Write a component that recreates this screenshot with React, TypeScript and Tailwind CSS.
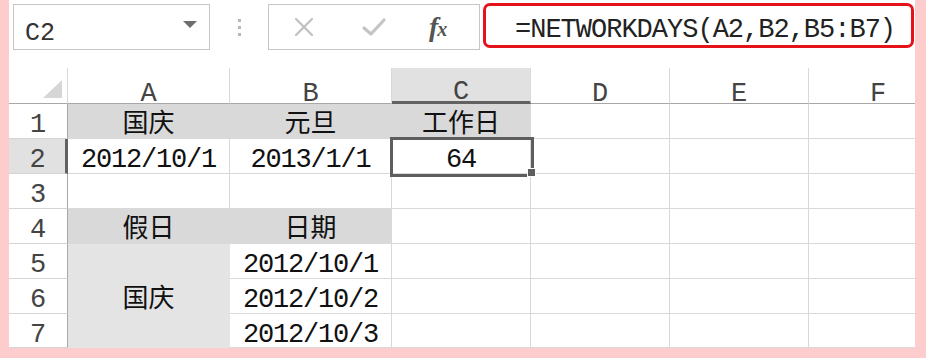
import React from 'react'

const COLS = ['A', 'B', 'C', 'D', 'E', 'F']

const mono = "font-['Liberation_Mono','Noto_Sans_CJK_SC',monospace]"
const cjk = "font-['Noto_Sans_CJK_SC',sans-serif]"

function XIcon() {
  return (
    <svg width="22" height="20" viewBox="0 0 22 20" fill="none" stroke="#c0c0c0" strokeWidth="2.2" strokeLinecap="round">
      <path d="M3 2 L19 18" />
      <path d="M19 2 L3 18" />
    </svg>
  )
}

function CheckIcon() {
  return (
    <svg width="26" height="20" viewBox="0 0 26 20" fill="none" stroke="#c4c4c4" strokeWidth="3.2" strokeLinecap="round" strokeLinejoin="round">
      <path d="M3 11 L10 17 L23 3" />
    </svg>
  )
}

function CornerTriangle() {
  return (
    <svg width="19" height="18" viewBox="0 0 19 18">
      <path d="M19 0 L19 18 L0 18 Z" fill="#d6d6d6" />
    </svg>
  )
}

function Toolbar() {
  return (
    <div className="flex h-[68px] shrink-0 items-start">
      <div className="ml-[4px] mt-[4px] flex h-[46px] w-[197px] items-start justify-between border border-[#c6c6c6] pl-[11px] pr-[12px]">
        <span className={`${mono} pt-[16px] text-[25px] leading-none text-[#333]`}>C2</span>
        <svg width="14" height="8" viewBox="0 0 14 8" className="mt-[16px]">
          <path d="M0 0 L14 0 L7 7 Z" fill="#6e6e6e" />
        </svg>
      </div>
      <div className="mt-[4px] flex h-[46px] w-[58px] flex-col items-center justify-center gap-[4px]">
        <span className="h-[3px] w-[3px] bg-[#b8b8b8]" />
        <span className="h-[3px] w-[3px] bg-[#b8b8b8]" />
        <span className="h-[3px] w-[3px] bg-[#b8b8b8]" />
      </div>
      <div className="mt-[4px] flex h-[46px] w-[212px] items-center border border-[#c6c6c6] pl-[24px]">
        <XIcon />
        <span className="ml-[46px]">
          <CheckIcon />
        </span>
        <span className="ml-[42px] flex items-baseline font-['Liberation_Serif',serif] font-bold italic text-[#555]">
          <span className="text-[28px] leading-none">f</span>
          <span className="-ml-[1px] text-[20px] leading-none">x</span>
        </span>
      </div>
      <div className="ml-[3px] mt-[3px] flex h-[45px] w-[431px] items-start rounded-[7px] border-[3px] border-[#e5121a] pl-[29px]">
        <span className={`${mono} pt-[11px] text-[27px] leading-none tracking-[-1px] text-[#222]`}>=NETWORKDAYS(A2,B2,B5:B7)</span>
      </div>
    </div>
  )
}

function ColHeader({ label }: { label: string }) {
  const selected = label === 'C'
  return (
    <div
      className={
        selected
          ? `${mono} flex items-start justify-center border-b-[3px] border-r border-b-[#626262] border-r-[#d9d9d9] bg-[#e1e1e1] pt-[11px] text-[27px] leading-[22px] text-[#444]`
          : `${mono} flex items-start justify-center border-b border-r border-b-[#a8a8a8] border-r-[#d9d9d9] pt-[13px] text-[27px] leading-[22px] text-[#444]`
      }
    >
      <span className="translate-y-[2px]">{label}</span>
    </div>
  )
}

function RowHeader({ n }: { n: number }) {
  const selected = n === 2
  return (
    <div
      className={
        selected
          ? `${mono} flex items-start justify-center border-b border-r-[3px] border-b-[#d4d4d4] border-r-[#626262] bg-[#e1e1e1] pl-[1px] pt-[10px] text-[27px] leading-[22px] text-[#444]`
          : `${mono} flex items-start justify-center border-b border-r border-b-[#d4d4d4] border-r-[#a8a8a8] pt-[10px] text-[27px] leading-[22px] text-[#444]`
      }
    >
      {n}
    </div>
  )
}

function Cell({ children, fill, font }: { children?: React.ReactNode; fill?: 'dark'; font?: 'mono' | 'cjk' }) {
  const f =
    font === 'cjk'
      ? `${cjk} items-center text-[26px] leading-none`
      : `${mono} items-start pt-[10px] text-[27px] leading-[22px] tracking-[-1.2px]`
  return (
    <div
      className={
        fill === 'dark'
          ? `${f} flex justify-center border-b border-r border-[#d9d9d9] bg-[#d9d9d9] text-[#111]`
          : `${f} flex justify-center border-b border-r border-[#d9d9d9] bg-white text-[#111]`
      }
    >
      {children}
    </div>
  )
}

function Blank() {
  return <div className="border-b border-r border-[#d9d9d9]" />
}

function Sheet() {
  return (
    <div className="grid w-max grid-cols-[59px_162px_162px_139px_139px_139px_139px] grid-rows-[36px_repeat(6,35px)_34px]">
      <div className="flex items-start justify-end border-b border-r border-b-[#a8a8a8] border-r-[#d9d9d9] pr-[5px] pt-[12px]">
        <CornerTriangle />
      </div>
      {COLS.map((c) => (
        <ColHeader key={c} label={c} />
      ))}

      <RowHeader n={1} />
      <Cell fill="dark" font="cjk">国庆</Cell>
      <Cell fill="dark" font="cjk">元旦</Cell>
      <Cell fill="dark" font="cjk">工作日</Cell>
      <Blank />
      <Blank />
      <Blank />

      <RowHeader n={2} />
      <Cell>2012/10/1</Cell>
      <Cell>2013/1/1</Cell>
      <div className="relative">
        <div className={`${mono} flex h-full items-start justify-center border-b border-r border-[#d9d9d9] pt-[10px] text-[27px] leading-[22px] tracking-[-1.2px] text-[#111]`}>
          64
        </div>
        <div className="absolute -left-[2px] -top-[2px] z-10 h-[40px] w-[144px] border-[3px] border-[#5e5e5e]">
          <div className="absolute -bottom-[3px] -right-[5px] h-[9px] w-[9px] border border-white bg-[#5e5e5e]" />
        </div>
      </div>
      <Blank />
      <Blank />
      <Blank />

      <RowHeader n={3} />
      <Blank />
      <Blank />
      <Blank />
      <Blank />
      <Blank />
      <Blank />

      <RowHeader n={4} />
      <Cell fill="dark" font="cjk">假日</Cell>
      <Cell fill="dark" font="cjk">日期</Cell>
      <Blank />
      <Blank />
      <Blank />
      <Blank />

      <RowHeader n={5} />
      <div className={`${cjk} row-span-3 flex items-center justify-center border-b border-r border-[#e4e4e4] bg-[#e4e4e4] text-[26px] leading-none text-[#111]`}>
        国庆
      </div>
      <Cell>2012/10/1</Cell>
      <Blank />
      <Blank />
      <Blank />
      <Blank />

      <RowHeader n={6} />
      <Cell>2012/10/2</Cell>
      <Blank />
      <Blank />
      <Blank />
      <Blank />

      <RowHeader n={7} />
      <Cell>2012/10/3</Cell>
      <Blank />
      <Blank />
      <Blank />
      <Blank />
    </div>
  )
}

export default function App() {
  return (
    <div className="h-[358px] w-[926px] bg-[#fdcdcd] pb-[10px] pl-[9px] pr-[11px]">
      <div className="flex h-full flex-col overflow-hidden bg-white">
        <Toolbar />
        <Sheet />
      </div>
    </div>
  )
}
